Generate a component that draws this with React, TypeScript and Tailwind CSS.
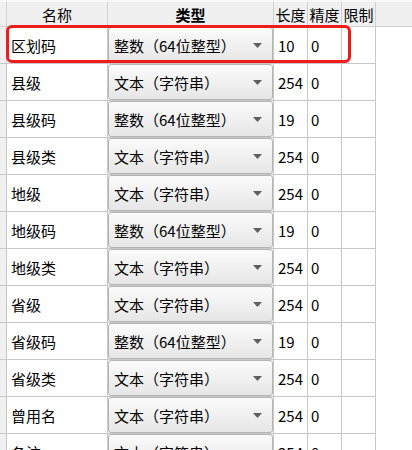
import React from 'react';

interface FieldRow {
  name: string;
  type: 'int' | 'text';
  length: string;
  precision: string;
}

const TYPE_LABEL: Record<FieldRow['type'], [string, string]> = {
  int: ['整数', '64位整型'],
  text: ['文本', '字符串'],
};

const rows: FieldRow[] = [
  { name: '区划码', type: 'int', length: '10', precision: '0' },
  { name: '县级', type: 'text', length: '254', precision: '0' },
  { name: '县级码', type: 'int', length: '19', precision: '0' },
  { name: '县级类', type: 'text', length: '254', precision: '0' },
  { name: '地级', type: 'text', length: '254', precision: '0' },
  { name: '地级码', type: 'int', length: '19', precision: '0' },
  { name: '地级类', type: 'text', length: '254', precision: '0' },
  { name: '省级', type: 'text', length: '254', precision: '0' },
  { name: '省级码', type: 'int', length: '19', precision: '0' },
  { name: '省级类', type: 'text', length: '254', precision: '0' },
  { name: '曾用名', type: 'text', length: '254', precision: '0' },
  { name: '备注', type: 'text', length: '254', precision: '0' },
];

const TypeCombo: React.FC<{ type: FieldRow['type'] }> = ({ type }) => {
  const [main, detail] = TYPE_LABEL[type];
  return (
    <div className="h-full w-full flex items-center justify-between rounded-[3px] border border-[#b4b4b4] bg-gradient-to-b from-[#fbfbfb] to-[#e6e6e6] pl-[5px] pr-[10px]">
      <span className="whitespace-nowrap flex items-center">
        {main}
        <span className="inline-block w-[15px] text-right">（</span>
        {detail}
        <span className="inline-block w-[15px] text-left">）</span>
      </span>
      <svg width="9" height="5" viewBox="0 0 9 5" className="fill-[#5f5f5f]">
        <path d="M0 0h9L4.5 5z" />
      </svg>
    </div>
  );
};

export default function App() {
  return (
    <div
      className="relative h-[450px] w-[412px] overflow-hidden bg-white text-[15px] text-black"
      style={{ fontFamily: '"Noto Sans CJK SC", "Noto Sans", sans-serif' }}
    >
      {/* header */}
      <div className="flex h-[27px] border-b border-[#d0d0d0] bg-[#f0f0f0] border-t-2 border-t-[#f8f8f8] leading-none">
        <div className="w-[7px] border-r border-[#d0d0d0]" />
        <div className="w-[101px] border-r border-[#d0d0d0] flex items-center justify-center">名称</div>
        <div className="w-[166px] border-r border-[#d0d0d0] flex items-center justify-center font-semibold">类型</div>
        <div className="w-[34px] border-r border-[#d0d0d0] flex items-center justify-center whitespace-nowrap">长度</div>
        <div className="w-[34px] border-r border-[#d0d0d0] flex items-center justify-center whitespace-nowrap">精度</div>
        <div className="w-[34px] border-r border-[#d0d0d0] flex items-center justify-center whitespace-nowrap">限制</div>
      </div>

      {rows.map((r, i) => (
        <div key={i} className="flex h-[37px] leading-none">
          <div className="w-[7px] bg-[#f0f0f0] border-r border-b border-[#c8c8c8]" />
          <div className="w-[101px] border-r border-b border-[#c8c8c8] flex items-center pl-[4px]">{r.name}</div>
          <div className="w-[166px] border-r border-b border-[#c8c8c8]">
            <TypeCombo type={r.type} />
          </div>
          <div className="w-[34px] border-r border-b border-[#c8c8c8] flex items-center pl-[4px]">{r.length}</div>
          <div className="w-[34px] border-r border-b border-[#c8c8c8] flex items-center pl-[3px]">{r.precision}</div>
          <div className="w-[34px] border-r border-b border-[#c8c8c8]" />
        </div>
      ))}

      {/* red highlight annotation */}
      <div className="absolute left-[6px] top-[25px] h-[38px] w-[345px] rounded-[6px] border-[3px] border-[#ee1c1c]" />
    </div>
  );
}
